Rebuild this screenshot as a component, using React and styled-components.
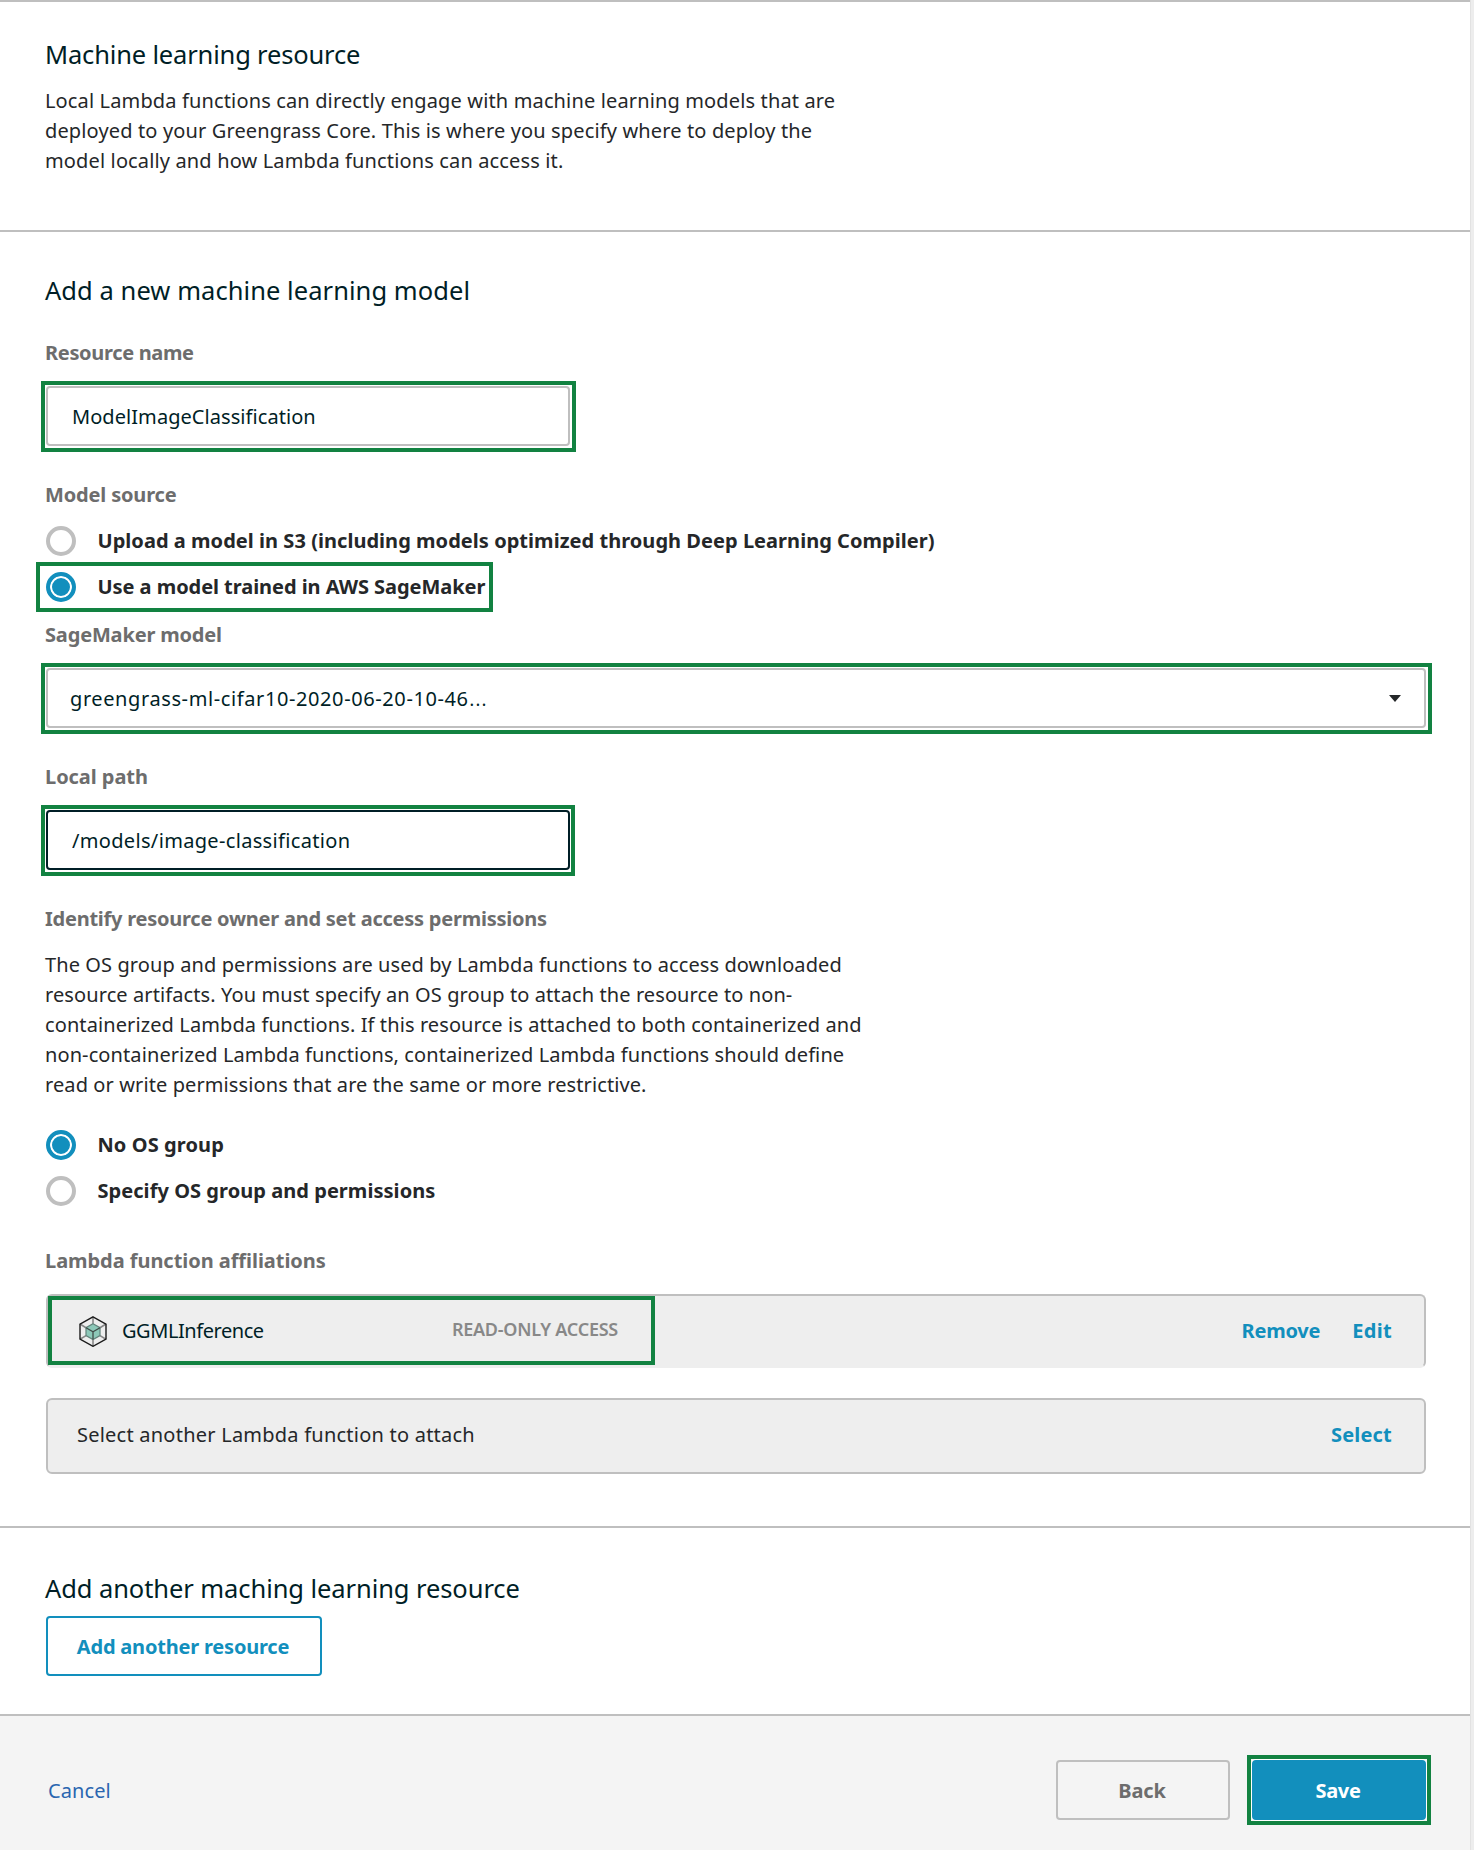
import React from "react";
import styled, { createGlobalStyle, css } from "styled-components";

const GlobalStyle = createGlobalStyle`
  *, *::before, *::after { box-sizing: border-box; }
  body {
    margin: 0;
    background: #ededed;
    color: #252729;
    font-family: "Noto Sans", "Open Sans", sans-serif;
    font-size: 20px;
    line-height: 30px;
  }
  h1, h2, p { margin: 0; }
  button, input { font: inherit; }
`;

const tracking = css`
  letter-spacing: ${(p) => p.$track || 0}px;
`;

const Page = styled.div`
  display: flex;
  height: 1850px;
  overflow: hidden;
`;

const Main = styled.main`
  display: flex;
  flex-direction: column;
  width: 1470px;
  background: #fff;
`;

const Gutter = styled.aside`
  flex: 1;
  border-left: 1px solid #e2e2e2;
  background: #ededed;
`;

const Section = styled.section`
  display: flex;
  flex-direction: column;
  align-items: flex-start;
  border-top: 2px solid #bfbfbf;
  padding: ${(p) => p.$pad};
`;

const Title = styled.h2`
  ${tracking}
  color: #001e26;
  font-size: 25.5px;
  font-weight: 400;
  line-height: 36px;
`;

const Copy = styled.p`
  ${tracking}
  margin: ${(p) => p.$top}px 0 -1px;
  padding-top: 1px;
  white-space: nowrap;
`;

const Label = styled.div`
  ${tracking}
  margin: ${(p) => p.$top}px 0 -1px;
  padding-top: 1px;
  color: #6d6d6d;
  font-weight: 700;
  white-space: nowrap;
`;

const highlight = css`
  position: relative;
  &::after {
    content: "";
    position: absolute;
    inset: ${(p) => p.$mark};
    border: 4px solid #128241;
    pointer-events: none;
  }
`;

const Marked = styled.div`
  ${(p) => p.$mark && highlight}
  display: flex;
`;

const FieldFrame = styled(Marked)`
  width: ${(p) => p.$width}px;
  margin: 19px 0 0 1px;
`;

const Input = styled.input`
  ${tracking}
  width: 100%;
  height: 60px;
  padding: 1px 0 0 24px;
  border: 2px solid ${(p) => (p.$active ? "#001e26" : "#bfbfbf")};
  border-radius: 4px;
  outline: none;
  background: #fff;
  color: #001e26;
`;

const SelectBox = styled.div`
  display: flex;
  align-items: center;
  justify-content: space-between;
  width: 100%;
  height: 60px;
  padding: 1px 23px 0 22px;
  border: 2px solid #bfbfbf;
  border-radius: 4px;
  color: #001e26;
`;

const SelectValue = styled.span`
  ${tracking}
`;

const Ellipsis = styled.span`
  font-size: 25px;
  font-weight: 300;
  line-height: 1;
`;

const Caret = styled.span`
  border: 6px solid transparent;
  border-top: 7px solid #252729;
  border-bottom: 0;
`;

const RadioGroup = styled.div`
  display: flex;
  flex-direction: column;
  gap: 16px;
  align-items: flex-start;
  margin: ${(p) => p.$top}px 0 0 1px;
`;

const RadioRow = styled.div`
  ${(p) => p.$mark && highlight}
  display: flex;
  align-items: center;
  gap: 21.5px;
  height: 30px;
`;

const RadioDot = styled.span`
  width: 30px;
  height: 30px;
  border: 4px solid ${(p) => (p.$on ? "#128fbd" : "#bfbfbf")};
  border-radius: 50%;
  background: ${(p) => (p.$on ? "#128fbd" : "#fff")};
  box-shadow: ${(p) => (p.$on ? "inset 0 0 0 2px #fff" : "none")};
`;

const RadioText = styled.span`
  ${tracking}
  font-weight: 700;
  white-space: nowrap;
`;

const ListRow = styled.div`
  display: flex;
  align-items: center;
  justify-content: space-between;
  width: 1380px;
  height: ${(p) => p.$height}px;
  margin: ${(p) => p.$top}px 0 0 1px;
  padding: 0 32px 0 0;
  border: 2px solid #bfbfbf;
  border-radius: 6px;
  background: #eee;
  ${(p) => p.$open && css`border-bottom-color: #eee;`}
`;

const FunctionInfo = styled.div`
  ${highlight}
  display: flex;
  align-items: center;
  width: 607px;
  height: 70px;
  padding: 0 0 0 31px;
`;

const FunctionName = styled.span`
  ${tracking}
  flex: 1;
  margin-left: 15px;
  color: #001e26;
`;

const Access = styled.span`
  ${tracking}
  margin: -5px 37px 0 0;
  color: #888;
  font-size: 18px;
  font-weight: 600;
`;

const RowText = styled.span`
  ${tracking}
  margin: -2px 0 0 29px;
`;

const Actions = styled.div`
  display: flex;
  gap: 32px;
  margin-top: ${(p) => p.$lift || 0}px;
`;

const Action = styled.a`
  ${tracking}
  color: #128fbd;
  font-weight: 700;
`;

const Button = styled.button`
  ${tracking}
  width: ${(p) => p.$width}px;
  height: 60px;
  padding: 1px 2px 0 0;
  border: 2px solid ${(p) => p.$line};
  border-radius: 4px;
  background: ${(p) => p.$fill || "transparent"};
  color: ${(p) => p.$ink};
  font-weight: 700;
  ${(p) => p.$ring && css`box-shadow: 0 0 0 1px #fff;`}
`;

const ButtonSlot = styled.div`
  margin: 10px 0 0 1px;
`;

const Footer = styled.footer`
  display: flex;
  align-items: flex-start;
  justify-content: space-between;
  flex: 1;
  padding: 44px 44px 0 48px;
  border-top: 2px solid #bfbfbf;
  background: #f4f4f4;
`;

const Cancel = styled.a`
  ${tracking}
  margin-top: 16px;
  color: #2a66b0;
`;

const ButtonBar = styled.div`
  display: flex;
  gap: 22px;
`;

const LambdaIcon = () => (
  <svg width="28" height="31" viewBox="0 0 28 31" fill="none">
    <path d="M14 7.7 21 11.7V19.6L14 23.6 7 19.6V11.7Z" fill="#8cc8b8" />
    <path
      d="M14 1V7.7M27 8 21 11.7M27 23.2 21 19.6M14 30.3V23.6M1 23.2 7 19.6M1 8 7 11.7"
      stroke="#888"
      strokeWidth="1.6"
    />
    <path d="M14 7.7 21 11.7V19.6L14 23.6 7 19.6V11.7Z" stroke="#62837b" strokeWidth="1.2" />
    <path d="M7 11.7 14 15.7 21 11.7M14 15.7V23.6" stroke="#3f4b48" strokeWidth="1.3" />
    <path d="M14 .9 27 8.1V23.1L14 30.3 1 23.1V8.1Z" stroke="#1b1b1b" strokeWidth="1.4" />
  </svg>
);

const Radio = ({ on, mark, track, children }) => (
  <RadioRow $mark={mark}>
    <RadioDot $on={on} />
    <RadioText $track={track}>{children}</RadioText>
  </RadioRow>
);

export default function App() {
  return (
    <>
      <GlobalStyle />
      <Page>
        <Main>
          <Section $pad="34px 44px 55px 45px">
            <Title as="h1" $track={-0.17}>Machine learning resource</Title>
            <Copy $top={13} $track={0.14}>
              Local Lambda functions can directly engage with machine learning models that are<br />
              deployed to your Greengrass Core. This is where you specify where to deploy the<br />
              model locally and how Lambda functions can access it.
            </Copy>
          </Section>

          <Section $pad="40px 44px 52px 45px">
            <Title $track={0.06}>Add a new machine learning model</Title>

            <Label $top={29} $track={-0.33}>Resource name</Label>
            <FieldFrame $width={524} $mark="-5px -6px -6px -5px">
              <Input $track={0.06} defaultValue="ModelImageClassification" />
            </FieldFrame>

            <Label $top={33} $track={-0.16}>Model source</Label>
            <RadioGroup $top={17}>
              <Radio track={0.04}>
                Upload a model in S3 (including models optimized through Deep Learning Compiler)
              </Radio>
              <Radio on track={-0.05} mark="-10px -8px -10px -10px">Use a model trained in AWS SageMaker</Radio>
            </RadioGroup>

            <Label $top={17} $track={-0.17}>SageMaker model</Label>
            <FieldFrame $width={1380} $mark="-5px -6px -6px -5px">
              <SelectBox>
                <SelectValue $track={0.6}>
                  greengrass-ml-cifar10-2020-06-20-10-46<Ellipsis>…</Ellipsis>
                </SelectValue>
                <Caret />
              </SelectBox>
            </FieldFrame>

            <Label $top={33} $track={-0.05}>Local path</Label>
            <FieldFrame $width={524} $mark="-5px -5px -6px -5px">
              <Input $active $track={0.33} defaultValue="/models/image-classification" />
            </FieldFrame>

            <Label $top={33} $track={-0.24}>Identify resource owner and set access permissions</Label>
            <Copy $top={16} $track={0.1}>
              The OS group and permissions are used by Lambda functions to access downloaded<br />
              resource artifacts. You must specify an OS group to attach the resource to non-<br />
              containerized Lambda functions. If this resource is attached to both containerized and<br />
              non-containerized Lambda functions, containerized Lambda functions should define<br />
              read or write permissions that are the same or more restrictive.
            </Copy>

            <RadioGroup $top={31}>
              <Radio on track={0.1}>No OS group</Radio>
              <Radio track={0.05}>Specify OS group and permissions</Radio>
            </RadioGroup>

            <Label $top={39} $track={-0.05}>Lambda function affiliations</Label>
            <ListRow $top={19} $height={74} $open>
              <FunctionInfo $mark="0 0 1px 0">
                <LambdaIcon />
                <FunctionName $track={-0.44}>GGMLInference</FunctionName>
                <Access $track={-0.25}>READ-ONLY ACCESS</Access>
              </FunctionInfo>
              <Actions>
                <Action $track={-0.2}>Remove</Action>
                <Action $track={0.3}>Edit</Action>
              </Actions>
            </ListRow>
            <ListRow $top={30} $height={76}>
              <RowText $track={0.23}>Select another Lambda function to attach</RowText>
              <Actions $lift={-2}>
                <Action $track={0.2}>Select</Action>
              </Actions>
            </ListRow>
          </Section>

          <Section $pad="42px 44px 38px 45px">
            <Title $track={-0.08}>Add another maching learning resource</Title>
            <ButtonSlot>
              <Button $width={276} $line="#128fbd" $ink="#128fbd" $track={-0.2}>
                Add another resource
              </Button>
            </ButtonSlot>
          </Section>

          <Footer>
            <Cancel $track={0.1}>Cancel</Cancel>
            <ButtonBar>
              <Button $width={174} $line="#bfbfbf" $ink="#6d6d6d" $track={-0.1}>Back</Button>
              <Marked $mark="-5px">
                <Button $width={174} $line="#128fbd" $fill="#128fbd" $ink="#fff" $track={-0.3} $ring>Save</Button>
              </Marked>
            </ButtonBar>
          </Footer>
        </Main>
        <Gutter />
      </Page>
    </>
  );
}
